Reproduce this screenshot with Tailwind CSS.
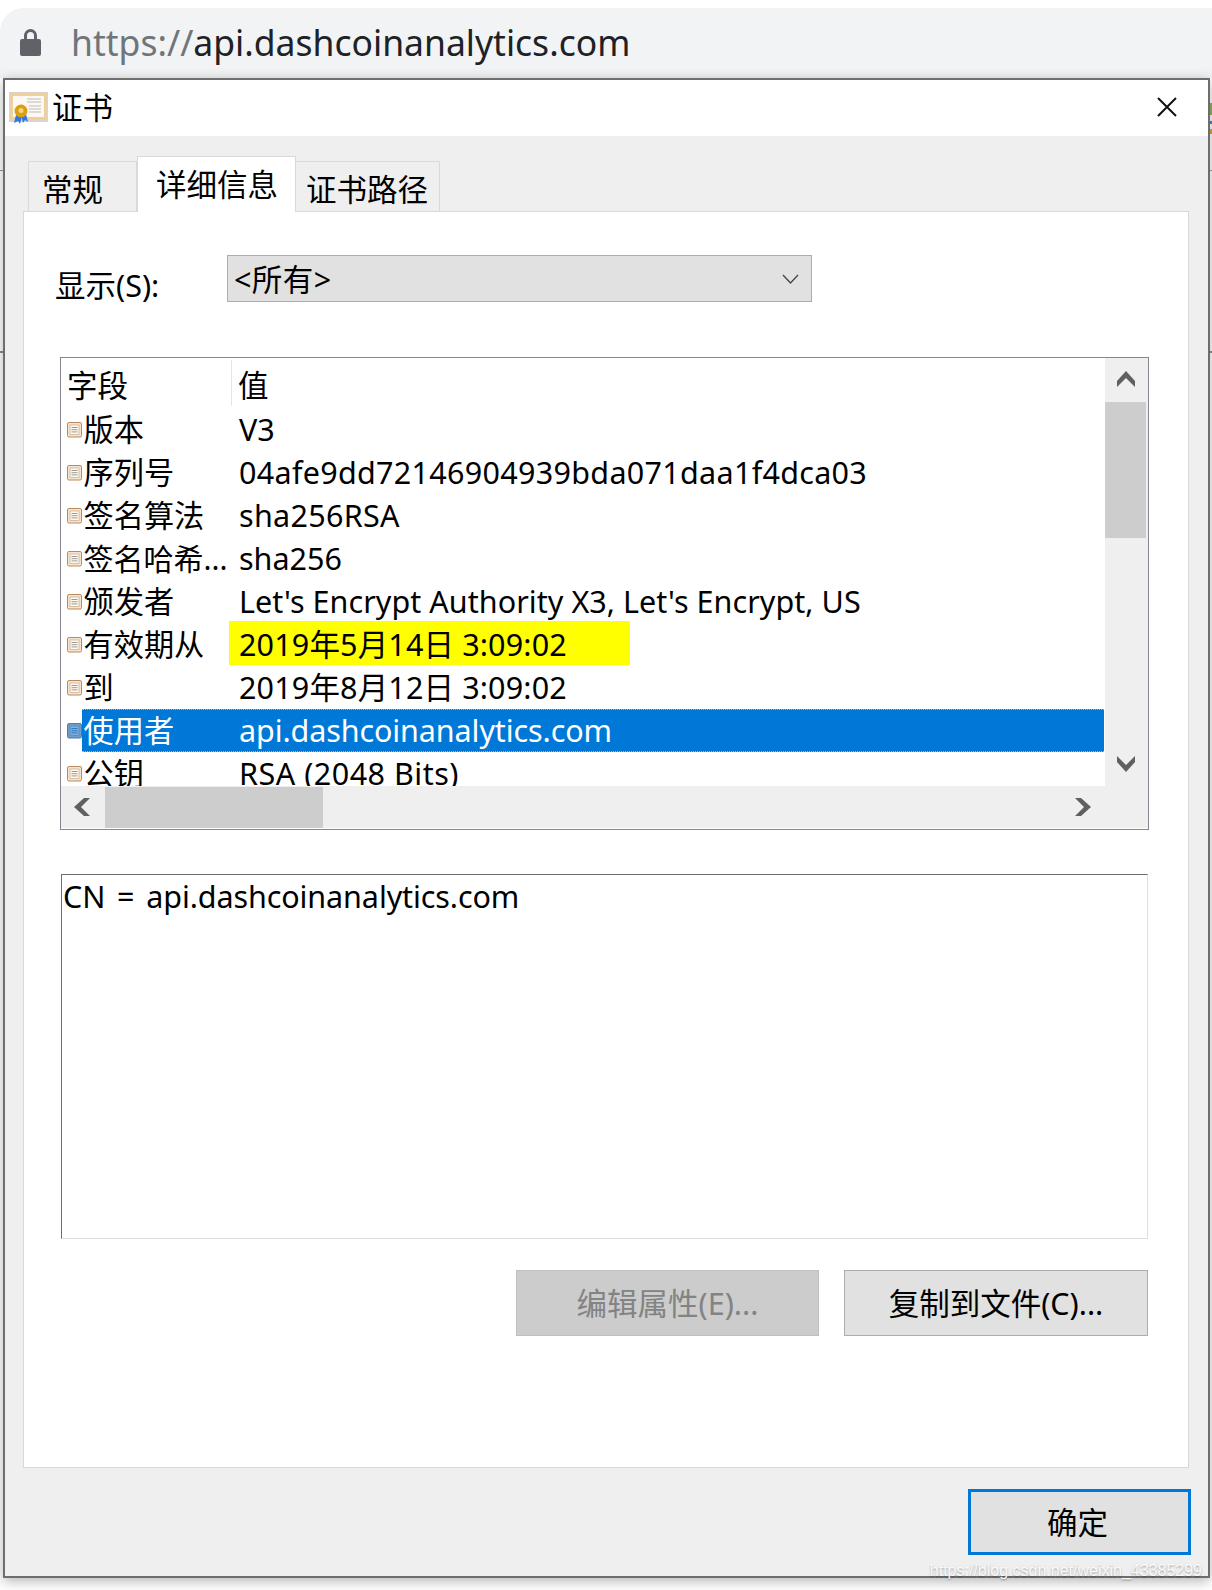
<!DOCTYPE html>
<html lang="zh-CN">
<head>
    <meta charset="UTF-8">
    <title>证书</title>
    <script src="https://cdn.jsdelivr.net/npm/@tailwindcss/browser@4"></script>
</head>
<body class="relative w-[1212px] h-[1590px] overflow-hidden bg-white text-[30.5px] leading-[43px] text-black font-['Noto_Sans','Noto_Sans_CJK_SC',sans-serif]">
    <!-- browser address bar behind the dialog -->
    <div class="mt-[8px] h-[70px] bg-[#f1f3f4] rounded-tl-[24px] flex items-center pl-[20px]">
        <svg class="w-[21px] h-[28px] -mt-[2px]" viewBox="0 0 21 28"><path d="M4 11V7.5a6.5 6.5 0 0 1 13 0V11h2a2 2 0 0 1 2 2v13a2 2 0 0 1-2 2H2a2 2 0 0 1-2-2V13a2 2 0 0 1 2-2h2zm3 0h7V7.5a3.5 3.5 0 0 0-7 0V11z" fill="#5f6368"/></svg>
        <div class="ml-[30px] text-[35.5px] leading-[50px] -mt-[2px] text-[#202124]"><span class="text-[#70757a]">https://</span>api.dashcoinanalytics.com</div>
    </div>

    <!-- bits of the page showing either side of the dialog -->
    <div class="absolute left-0 top-[170px] w-full h-px bg-[#9a9a9a]"></div>
    <div class="absolute left-0 top-[351px] w-full h-[2px] bg-[#8a8a8a]"></div>
    <div class="absolute right-0 top-[103px] w-[2px] h-[12px] bg-[#8fb35a]"></div>
    <div class="absolute right-0 top-[121px] w-[2px] h-[3px] bg-[#4a80c8]"></div>
    <div class="absolute right-0 top-[129px] w-[2px] h-[5px] bg-[#d8a830]"></div>

    <!-- certificate dialog -->
    <div class="relative ml-[3px] w-[1207px] h-[1500px] border-2 border-[#6e6e6e] bg-[#efefef] flex flex-col shadow-[0_3px_12px_rgba(0,0,0,0.3)]">
        <div class="h-[56px] shrink-0 bg-white flex items-center pl-[4px]">
            <svg class="w-[40px] h-[34px]" viewBox="0 0 40 34">
                <rect x="0" y="1" width="39" height="30" fill="#d9d4cc"/>
                <rect x="1.5" y="2.5" width="36" height="26" fill="#f3cf98"/>
                <rect x="4" y="5" width="31" height="21" fill="#fdf9f2"/>
                <path d="M18 8h14M18 11h14M20 15h12M20 18h12M20 21h12" stroke="#cfcfcf" stroke-width="1.5"/>
                <path d="M7 24l-2 8 4-2 2 3 2-8zM12 24l2 8 2-3 3 2-2-8z" fill="#2f78e0"/>
                <circle cx="12" cy="20" r="6.5" fill="#dd9f12"/>
                <circle cx="12" cy="19.5" r="2.5" fill="#f5d679"/>
            </svg>
            <span class="ml-[3px] -mt-[2px]">证书</span>
            <svg class="ml-auto mr-[31px] w-[20px] h-[20px] -mt-[2px]" viewBox="0 0 20 20"><path d="M1 1l18 18M19 1L1 19" stroke="#111" stroke-width="2"/></svg>
        </div>

        <div class="flex-1 flex flex-col pl-[18px] pr-[19px] pt-[20px]">
            <div class="h-[55px] pl-[5px] flex items-end relative z-10">
                <div class="w-[109px] h-[50px] bg-[#efefef] border border-b-0 border-[#d9d9d9] pl-[13px] leading-[54px]">常规</div>
                <div class="w-[159px] h-[56px] -mb-px bg-white border border-b-0 border-[#d9d9d9] pl-[18px] leading-[54px]">详细信息</div>
                <div class="w-[144px] h-[50px] bg-[#efefef] border border-l-0 border-b-0 border-[#d9d9d9] pl-[10px] leading-[54px]">证书路径</div>
            </div>

            <div class="h-[1257px] bg-white border border-[#d9d9d9] pl-[36px] pt-[43px]">
                <div class="flex items-center">
                    <div class="w-[172px] h-[47px] -ml-[5px] leading-[61px]">显示(S):</div>
                    <div class="w-[585px] h-[47px] bg-[#e1e1e1] border border-[#adadad] flex items-center justify-between pl-[6px] pr-[12px]">
                        <span class="mt-[2px] tracking-[0.4px]">&lt;所有&gt;</span>
                        <svg class="w-[17px] h-[10px]" viewBox="0 0 17 10"><path d="M1 1l7.5 8L16 1" fill="none" stroke="#444" stroke-width="1.3"/></svg>
                    </div>
                </div>

                <!-- field list -->
                <div class="mt-[55px] w-[1089px] h-[473px] border border-[#828790] flex flex-col">
                    <div class="h-[428px] flex">
                        <div class="flex-1 overflow-hidden bg-white">
                            <div class="h-[50px] flex items-center pl-[6px]">
                                <div class="w-[165px] h-[46px] border-r border-[#e5e5e5] leading-[50px]">字段</div>
                                <div class="pl-[6px] leading-[50px] h-[46px]">值</div>
                            </div>
                            <div class="h-[43px] flex items-center pl-[6px]">
                                <svg class="w-[15px] h-[16px]" viewBox="0 0 15 16"><rect x="0.5" y="0.5" width="14" height="14.5" rx="1.5" fill="#f6e4cf" stroke="#b98a5e"/><rect x="3" y="3" width="9" height="9.5" fill="#fffaf3" stroke="#c8a888" stroke-width="0.7"/><path d="M4.5 5.5h6M4.5 7.7h6M4.5 9.9h6" stroke="#8f8f8f" stroke-width="0.9"/></svg>
                                <div class="w-[157px] pl-[1.5px] text-[30.2px]">版本</div><div>V3</div>
                            </div>
                            <div class="h-[43px] flex items-center pl-[6px]">
                                <svg class="w-[15px] h-[16px]" viewBox="0 0 15 16"><rect x="0.5" y="0.5" width="14" height="14.5" rx="1.5" fill="#f6e4cf" stroke="#b98a5e"/><rect x="3" y="3" width="9" height="9.5" fill="#fffaf3" stroke="#c8a888" stroke-width="0.7"/><path d="M4.5 5.5h6M4.5 7.7h6M4.5 9.9h6" stroke="#8f8f8f" stroke-width="0.9"/></svg>
                                <div class="w-[157px] pl-[1.5px] text-[30.2px]">序列号</div><div class="tracking-[0.3px]">04afe9dd72146904939bda071daa1f4dca03</div>
                            </div>
                            <div class="h-[43px] flex items-center pl-[6px]">
                                <svg class="w-[15px] h-[16px]" viewBox="0 0 15 16"><rect x="0.5" y="0.5" width="14" height="14.5" rx="1.5" fill="#f6e4cf" stroke="#b98a5e"/><rect x="3" y="3" width="9" height="9.5" fill="#fffaf3" stroke="#c8a888" stroke-width="0.7"/><path d="M4.5 5.5h6M4.5 7.7h6M4.5 9.9h6" stroke="#8f8f8f" stroke-width="0.9"/></svg>
                                <div class="w-[157px] pl-[1.5px] text-[30.2px]">签名算法</div><div class="tracking-[0.3px]">sha256RSA</div>
                            </div>
                            <div class="h-[43px] flex items-center pl-[6px]">
                                <svg class="w-[15px] h-[16px]" viewBox="0 0 15 16"><rect x="0.5" y="0.5" width="14" height="14.5" rx="1.5" fill="#f6e4cf" stroke="#b98a5e"/><rect x="3" y="3" width="9" height="9.5" fill="#fffaf3" stroke="#c8a888" stroke-width="0.7"/><path d="M4.5 5.5h6M4.5 7.7h6M4.5 9.9h6" stroke="#8f8f8f" stroke-width="0.9"/></svg>
                                <div class="w-[157px] pl-[1.5px] text-[30px] whitespace-nowrap">签名哈希...</div><div>sha256</div>
                            </div>
                            <div class="h-[43px] flex items-center pl-[6px]">
                                <svg class="w-[15px] h-[16px]" viewBox="0 0 15 16"><rect x="0.5" y="0.5" width="14" height="14.5" rx="1.5" fill="#f6e4cf" stroke="#b98a5e"/><rect x="3" y="3" width="9" height="9.5" fill="#fffaf3" stroke="#c8a888" stroke-width="0.7"/><path d="M4.5 5.5h6M4.5 7.7h6M4.5 9.9h6" stroke="#8f8f8f" stroke-width="0.9"/></svg>
                                <div class="w-[157px] pl-[1.5px] text-[30.2px]">颁发者</div><div class="tracking-[0.05px]">Let's Encrypt Authority X3, Let's Encrypt, US</div>
                            </div>
                            <div class="h-[43px] flex items-center pl-[6px]">
                                <svg class="w-[15px] h-[16px]" viewBox="0 0 15 16"><rect x="0.5" y="0.5" width="14" height="14.5" rx="1.5" fill="#f6e4cf" stroke="#b98a5e"/><rect x="3" y="3" width="9" height="9.5" fill="#fffaf3" stroke="#c8a888" stroke-width="0.7"/><path d="M4.5 5.5h6M4.5 7.7h6M4.5 9.9h6" stroke="#8f8f8f" stroke-width="0.9"/></svg>
                                <div class="w-[157px] pl-[1.5px] text-[30.2px]">有效期从</div>
                                <div class="w-[401px] h-[44px] -mt-[3px] -ml-[10px] pl-[10px] leading-[47px] tracking-[0.15px] bg-[#ffff00]">2019年5月14日 3:09:02</div>
                            </div>
                            <div class="h-[43px] flex items-center pl-[6px]">
                                <svg class="w-[15px] h-[16px]" viewBox="0 0 15 16"><rect x="0.5" y="0.5" width="14" height="14.5" rx="1.5" fill="#f6e4cf" stroke="#b98a5e"/><rect x="3" y="3" width="9" height="9.5" fill="#fffaf3" stroke="#c8a888" stroke-width="0.7"/><path d="M4.5 5.5h6M4.5 7.7h6M4.5 9.9h6" stroke="#8f8f8f" stroke-width="0.9"/></svg>
                                <div class="w-[157px] pl-[1.5px] text-[30.2px]">到</div><div class="tracking-[0.15px]">2019年8月12日 3:09:02</div>
                            </div>
                            <div class="h-[43px] flex items-center pl-[6px]">
                                <svg class="w-[15px] h-[16px]" viewBox="0 0 15 16"><rect x="0.5" y="0.5" width="14" height="14.5" rx="1.5" fill="#6f9cc4" stroke="#4f7da8"/><rect x="3" y="3" width="9" height="9.5" fill="#7fb0de" stroke="#4f88c0" stroke-width="0.7"/><path d="M4.5 5.5h6M4.5 7.7h6M4.5 9.9h6" stroke="#2a70b8" stroke-width="0.9"/></svg>
                                <div class="flex-1 h-[43px] mr-px flex bg-[#0078d7] text-white border-y border-dotted border-[#e8a860]">
                                    <div class="w-[157px] pl-[1.5px] text-[30.2px] leading-[41px]">使用者</div><div class="leading-[41px] tracking-[-0.1px]">api.dashcoinanalytics.com</div>
                                </div>
                            </div>
                            <div class="h-[43px] flex items-center pl-[6px]">
                                <svg class="w-[15px] h-[16px]" viewBox="0 0 15 16"><rect x="0.5" y="0.5" width="14" height="14.5" rx="1.5" fill="#f6e4cf" stroke="#b98a5e"/><rect x="3" y="3" width="9" height="9.5" fill="#fffaf3" stroke="#c8a888" stroke-width="0.7"/><path d="M4.5 5.5h6M4.5 7.7h6M4.5 9.9h6" stroke="#8f8f8f" stroke-width="0.9"/></svg>
                                <div class="w-[157px] pl-[1.5px] text-[30.2px]">公钥</div><div class="tracking-[0.5px]">RSA (2048 Bits)</div>
                            </div>
                        </div>
                        <!-- vertical scrollbar -->
                        <div class="w-[43px] bg-[#efefef] flex flex-col pr-[2px]">
                            <div class="h-[44px] flex items-center justify-center"><svg class="w-[18px] h-[16px] -mt-[3px]" viewBox="0 0 18 16"><path d="M9 0l9 10v6L9 7 0 16v-6z" fill="#606060"/></svg></div>
                            <div class="h-[136px] bg-[#cdcdcd]"></div>
                            <div class="flex-1 flex items-end justify-center pb-[14px]"><svg class="w-[18px] h-[16px]" viewBox="0 0 18 16"><path d="M9 16L0 6V0l9 9 9-9v6z" fill="#606060"/></svg></div>
                        </div>
                    </div>
                    <!-- horizontal scrollbar -->
                    <div class="flex-1 bg-[#efefef] flex items-center mb-px">
                        <div class="w-[44px] flex justify-center pr-[3px]"><svg class="w-[16px] h-[18px]" viewBox="0 0 16 18"><path d="M0 9l10-9h6L7 9l9 9h-6z" fill="#606060"/></svg></div>
                        <div class="w-[218px] h-[41px] bg-[#cdcdcd]"></div>
                        <svg class="ml-[752px] w-[16px] h-[18px]" viewBox="0 0 16 18"><path d="M16 9L6 0H0l9 9-9 9h6z" fill="#606060"/></svg>
                    </div>
                </div>

                <!-- field value -->
                <div class="mt-[44px] ml-px w-[1087px] h-[365px] bg-white border border-[#dfdfdf] border-t-[#6d6d6d] border-l-[#6d6d6d] pl-[1px] tracking-[-0.1px] [word-spacing:4px]">CN = api.dashcoinanalytics.com</div>

                <div class="mt-[31px] w-[1088px] flex justify-end gap-[25px]">
                    <div class="w-[303px] h-[66px] bg-[#cccccc] border border-[#bfbfbf] flex items-center justify-center text-[#838383]">编辑属性(E)...</div>
                    <div class="w-[304px] h-[66px] bg-[#e1e1e1] border border-[#adadad] flex items-center justify-center">复制到文件(C)...</div>
                </div>
            </div>

            <div class="mt-[21px] flex justify-end -mr-[2px]">
                <div class="w-[223px] h-[66px] bg-[#e1e1e1] border-[3px] border-[#0078d7] flex items-center justify-center pr-[4px]">确定</div>
            </div>
        </div>
    </div>

    <div class="absolute right-[10px] bottom-[8px] text-[16px] leading-[22px] text-white/90 font-['Liberation_Sans',sans-serif] [text-shadow:0_1px_2px_rgba(0,0,0,0.35)]">https://blog.csdn.net/weixin_43385299</div>
</body>
</html>
